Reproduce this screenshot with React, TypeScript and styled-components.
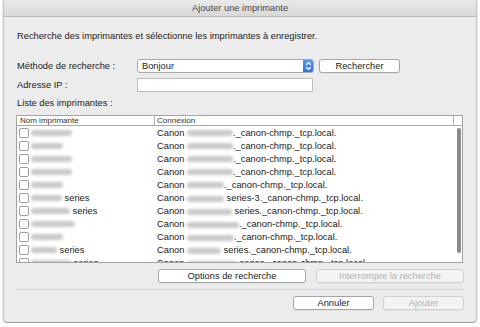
import styled, { createGlobalStyle } from 'styled-components'

type Printer = {
  name: number;
  nameSeries?: boolean;
  model: number;
  suffix: string;
}

const printers: Printer[] = [
  { name: 41, model: 46, suffix: '._canon-chmp._tcp.local.' },
  { name: 32, model: 46, suffix: '._canon-chmp._tcp.local.' },
  { name: 41, model: 46, suffix: '._canon-chmp._tcp.local.' },
  { name: 41, model: 46, suffix: '._canon-chmp._tcp.local.' },
  { name: 32, model: 37, suffix: '._canon-chmp._tcp.local.' },
  { name: 31, nameSeries: true, model: 37, suffix: '\u00a0series-3._canon-chmp._tcp.local.' },
  { name: 39, nameSeries: true, model: 45, suffix: '\u00a0series._canon-chmp._tcp.local.' },
  { name: 44, model: 52, suffix: '._canon-chmp._tcp.local.' },
  { name: 32, model: 47, suffix: '._canon-chmp._tcp.local.' },
  { name: 26, nameSeries: true, model: 34, suffix: '\u00a0series._canon-chmp._tcp.local.' },
  { name: 40, nameSeries: true, model: 50, suffix: '\u00a0series._canon-chmp._tcp.local.' },
]

const App = () => (
  <>
    <Global />
    <Win>
      <TitleBar>Ajouter une imprimante</TitleBar>
      <Content>
        <Intro>Recherche des imprimantes et sélectionne les imprimantes à enregistrer.</Intro>
        <FormRow $mt={17}>
          <Label>Méthode de recherche :</Label>
          <Select>
            <span>Bonjour</span>
            <Stepper>
              <svg width="11" height="14" viewBox="0 0 11 14">
                <path d="M3.5 5.5 L5.5 3.5 L7.5 5.5 M3.5 8.5 L5.5 10.5 L7.5 8.5" fill="none" stroke="#fff" strokeWidth="1.2" strokeLinecap="round" strokeLinejoin="round" />
              </svg>
            </Stepper>
          </Select>
          <Button $w={81} $ml={5}>Rechercher</Button>
        </FormRow>
        <FormRow $mt={5}>
          <Label>Adresse IP :</Label>
          <Input />
        </FormRow>
        <ListLabel>Liste des imprimantes :</ListLabel>
        <Table>
          <Header>
            <HeadCell>Nom imprimante</HeadCell>
            <HeadCell $sep>Connexion</HeadCell>
            <HeadCell $sep />
          </Header>
          <Body>
            <Rows>
              {printers.map((p, i) => (
                <Row key={i}>
                  <NameCell>
                    <Check />
                    <Blur $w={p.name} />
                    {p.nameSeries && <span>&nbsp;series</span>}
                  </NameCell>
                  <ConnCell>
                    Canon&nbsp;<Blur $w={p.model} />{p.suffix}
                  </ConnCell>
                </Row>
              ))}
            </Rows>
            <Track>
              <Thumb />
            </Track>
          </Body>
        </Table>
        <ButtonRow $mt={6} $gap={10}>
          <Button $w={148}>Options de recherche</Button>
          <Button $w={148} $disabled>Interrompre la recherche</Button>
        </ButtonRow>
        <Separator />
        <ButtonRow $mt={6} $gap={9}>
          <Button $w={81}>Annuler</Button>
          <Button $w={81} $disabled>Ajouter</Button>
        </ButtonRow>
      </Content>
    </Win>
  </>
)
export default App

const Global = createGlobalStyle`
  html, body {
    margin: 0;
    padding: 0;
    background: #fff;
  }
  body {
    font-family: "Liberation Sans", Arial, sans-serif;
    font-size: 9.3px;
    color: #222;
  }
`

const Win = styled.div`
  margin-left: 3px;
  width: 474px;
  height: 323px;
  box-sizing: border-box;
  background: #ececec;
  border: 1px solid #c6c6c6;
  border-top: none;
  border-bottom-color: #9c9c9c;
  border-radius: 0 0 5px 5px;
  box-shadow: 0 1px 3px rgba(0, 0, 0, 0.22);
  display: flex;
  flex-direction: column;
`

const TitleBar = styled.div`
  height: 16px;
  line-height: 17px;
  text-align: center;
  color: #4a4a4a;
  background: linear-gradient(#e9e9e9, #d8d8d8);
  border-bottom: 1px solid #b9b9b9;
`

const Content = styled.div`
  padding: 0 12px;
  display: flex;
  flex-direction: column;
`

const Intro = styled.div`
  margin-top: 13px;
  line-height: 12px;
  padding-left: 1px;
`

const FormRow = styled.div<{ $mt: number }>`
  display: flex;
  align-items: center;
  height: 14px;
  margin-top: ${p => p.$mt}px;
`

const Label = styled.div`
  width: 121px;
  padding-left: 1px;
  box-sizing: border-box;
`

const Select = styled.div`
  width: 177px;
  height: 14px;
  box-sizing: border-box;
  border: 1px solid #a9a9a9;
  border-radius: 3px;
  background: #fff;
  display: flex;
  align-items: center;
  justify-content: space-between;
  padding-left: 4px;
  overflow: hidden;
`

const Stepper = styled.div`
  width: 11px;
  height: 14px;
  margin-right: -1px;
  background: linear-gradient(#5b9cf8, #2d6cd9);
  border-radius: 0 3px 3px 0;
  display: flex;
`

const Input = styled.div`
  width: 176px;
  height: 14px;
  box-sizing: border-box;
  border: 1px solid #bdbdbd;
  background: #fff;
`

const Button = styled.div<{ $w: number; $ml?: number; $disabled?: boolean }>`
  width: ${p => p.$w}px;
  height: 14px;
  margin-left: ${p => p.$ml ?? 0}px;
  box-sizing: border-box;
  border: 1px solid ${p => (p.$disabled ? '#d0d0d0' : '#a6a6a6')};
  border-radius: 3px;
  background: ${p => (p.$disabled ? '#f3f3f3' : '#fff')};
  color: ${p => (p.$disabled ? '#b2b2b2' : '#222')};
  text-align: center;
  line-height: 12px;
  box-shadow: 0 0.5px 0 rgba(0, 0, 0, 0.08);
`

const ListLabel = styled.div`
  margin-top: 5px;
  line-height: 12px;
  padding-left: 1px;
`

const Table = styled.div`
  margin-top: 6px;
  width: 447px;
  height: 148px;
  box-sizing: border-box;
  border: 1px solid #a3a3a3;
  background: #fff;
  display: flex;
  flex-direction: column;
  overflow: hidden;
`

const Header = styled.div`
  height: 9px;
  flex: none;
  border-bottom: 1px solid #a8a8a8;
  display: grid;
  grid-template-columns: 137px 1fr 9px;
  font-size: 8px;
  line-height: 9px;
  color: #333;
`

const HeadCell = styled.div<{ $sep?: boolean }>`
  padding-left: ${p => (p.$sep ? 2 : 3)}px;
  border-left: ${p => (p.$sep ? '1px solid #b5b5b5' : 'none')};
  white-space: nowrap;
  overflow: hidden;
`

const Body = styled.div`
  flex: 1;
  min-height: 0;
  display: flex;
`

const Rows = styled.div`
  flex: 1;
  overflow: hidden;
`

const Row = styled.div`
  height: 13.1px;
  display: grid;
  grid-template-columns: 137px 1fr;
  align-items: center;
  white-space: nowrap;
`

const NameCell = styled.div`
  display: flex;
  align-items: center;
  padding-left: 2px;
`

const ConnCell = styled.div`
  padding-left: 3px;
  line-height: 12px;
`

const Check = styled.span`
  width: 10px;
  height: 10px;
  box-sizing: border-box;
  border: 1px solid #9d9d9d;
  border-radius: 2px;
  background: #fff;
  margin-right: 2px;
  flex: none;
`

const Blur = styled.span<{ $w: number }>`
  display: inline-block;
  vertical-align: middle;
  width: ${p => p.$w}px;
  height: 6px;
  background: #c9c9c9;
  border-radius: 3px;
  filter: blur(1.5px);
  flex: none;
`

const Track = styled.div`
  width: 9px;
  padding: 2px 0 0 4px;
  box-sizing: border-box;
`

const Thumb = styled.div`
  width: 4px;
  height: 125px;
  border-radius: 2px;
  background: #8b8b8b;
`

const ButtonRow = styled.div<{ $mt: number; $gap: number }>`
  margin-top: ${p => p.$mt}px;
  display: flex;
  justify-content: flex-end;
  gap: ${p => p.$gap}px;
`

const Separator = styled.div`
  margin-top: 6px;
  height: 1px;
  background: #d4d4d4;
`
